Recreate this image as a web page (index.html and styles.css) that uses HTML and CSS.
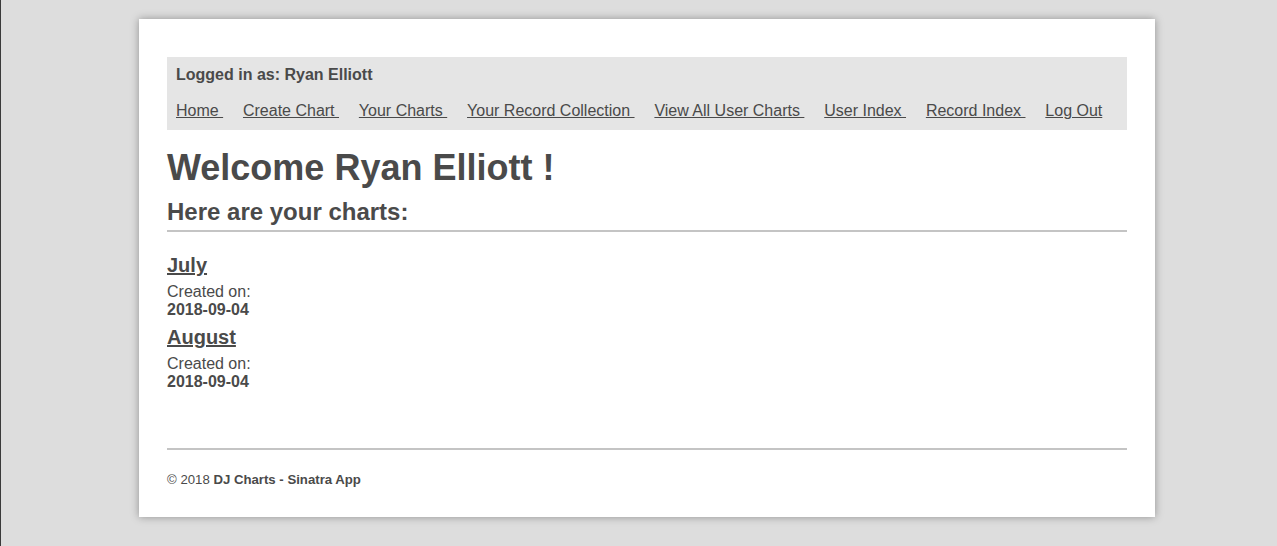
FILE: index.html
```html
<!DOCTYPE html>
<html>
<head>
<meta charset="utf-8">
<link rel="stylesheet" href="styles.css">
</head>
<body>
<div class="page">
  <div class="card">
    <div class="topbar">
      <div class="logged">Logged in as: Ryan Elliott</div>
      <nav class="nav">
        <a href="#">Home </a>
        <a href="#">Create Chart </a>
        <a href="#">Your Charts </a>
        <a href="#">Your Record Collection </a>
        <a href="#">View All User Charts </a>
        <a href="#">User Index </a>
        <a href="#">Record Index </a>
        <a href="#">Log Out</a>
      </nav>
    </div>
    <h1 class="welcome">Welcome Ryan Elliott !</h1>
    <h2 class="subhead">Here are your charts:</h2>
    <div class="charts">
      <div class="chart">
        <a class="chart-title" href="#">July</a>
        <div class="created">Created on:</div>
        <div class="date">2018-09-04</div>
      </div>
      <div class="chart">
        <a class="chart-title" href="#">August</a>
        <div class="created">Created on:</div>
        <div class="date">2018-09-04</div>
      </div>
    </div>
    <footer class="footer">© 2018 <strong>DJ Charts - Sinatra App</strong></footer>
  </div>
</div>
</body>
</html>
```
FILE: styles.css
```css
html, body {
  margin: 0;
  padding: 0;
}
body {
  background: #dddddd;
  border-left: 1px solid #3a3a3a;
  min-height: 546px;
  box-sizing: border-box;
  font-family: "Liberation Sans", Arial, Helvetica, sans-serif;
  color: #4a4a4a;
}
.page {
  display: flex;
  justify-content: center;
  padding: 19px 0 0 16px;
}
.card {
  width: 1016px;
  box-sizing: border-box;
  background: #ffffff;
  padding: 38px 28px 30px 28px;
  box-shadow: 0 0 8px rgba(0, 0, 0, 0.35);
  height: 498px;
}
.topbar {
  background: #e5e5e5;
  padding: 9px 9px 9px 9px;
  height: 73px;
  box-sizing: border-box;
}
.logged {
  font-weight: bold;
  font-size: 16px;
  line-height: 18px;
}
.nav {
  margin-top: 18px;
  font-size: 16px;
  line-height: 18px;
  display: flex;
}
.nav a {
  color: #4a4a4a;
  text-decoration: underline;
  white-space: pre;
  margin-right: 19.85px;
}
.welcome {
  font-size: 36px;
  margin: 18px 0 0 0;
  line-height: 40px;
}
.subhead {
  font-size: 24px;
  margin: 10px 0 0 0;
  line-height: 28px;
  padding-bottom: 4px;
  border-bottom: 2px solid #c4c4c4;
}
.charts {
  margin-top: 21px;
  margin-bottom: 57px;
  display: flex;
  flex-direction: column;
  gap: 6px;
}
.chart {
  display: flex;
  flex-direction: column;
  align-items: flex-start;
}
.chart-title {
  font-size: 20px;
  font-weight: bold;
  color: #4a4a4a;
  line-height: 24px;
  margin-bottom: 6px;
}
.created {
  font-size: 16px;
  line-height: 18px;
}
.date {
  font-size: 16px;
  font-weight: bold;
  line-height: 18px;
}
.footer {
  border-top: 2px solid #c4c4c4;
  padding-top: 22px;
  font-size: 13.2px;
  line-height: 16px;
}
.footer strong {
  font-weight: bold;
}
```
